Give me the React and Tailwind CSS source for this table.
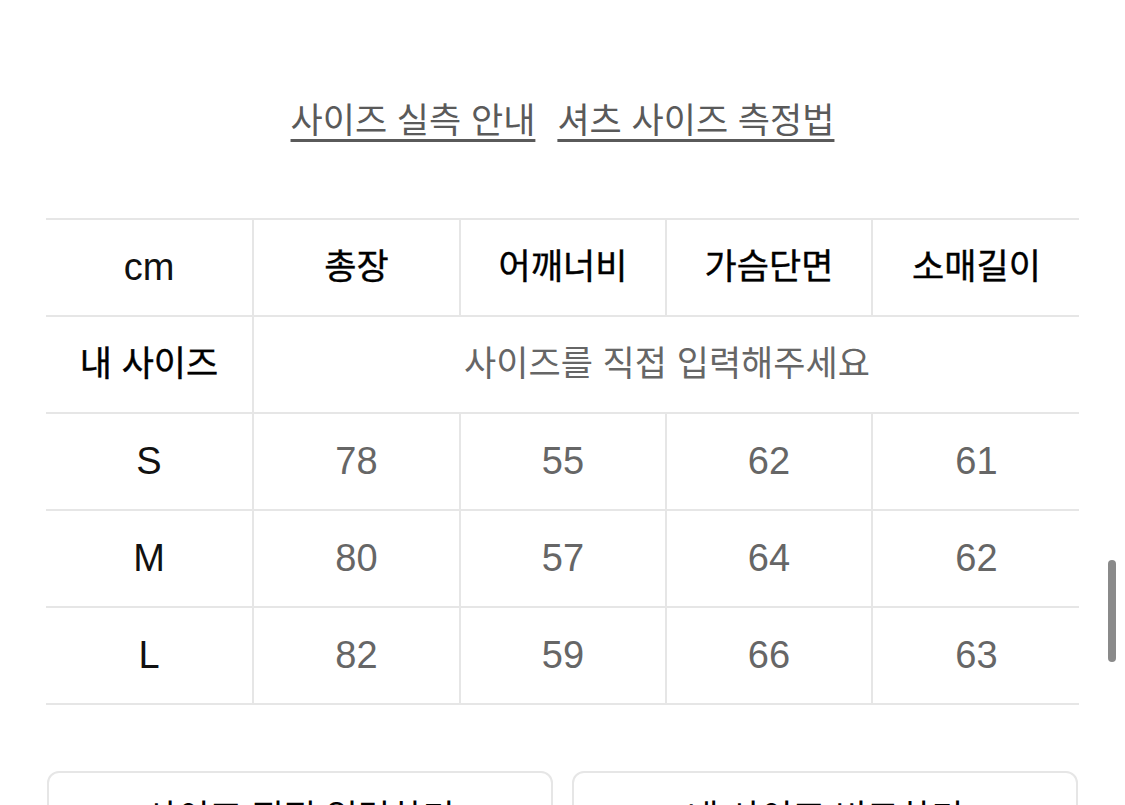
const font = { fontFamily: '"Liberation Sans", "Noto Sans CJK KR", sans-serif' };

const heads = ["총장", "어깨너비", "가슴단면", "소매길이"];

const rows = [
  { size: "S", values: ["78", "55", "62", "61"] },
  { size: "M", values: ["80", "57", "64", "62"] },
  { size: "L", values: ["82", "59", "66", "63"] },
];

const rowClass =
  "grid grid-cols-[208px_207px_206px_206px_207px] h-[97px] border-b-2 border-[#e6e6e6]";
const cellClass = "flex items-center justify-center border-r-2 border-[#e6e6e6]";
const lastCellClass = "flex items-center justify-center";

function SizeRow({ size, values }) {
  return (
    <div className={rowClass}>
      <div className={cellClass + " text-[38px] text-[#111]"}>{size}</div>
      {values.map((v, i) => (
        <div
          key={i}
          className={(i === values.length - 1 ? lastCellClass : cellClass) + " text-[38px] text-[#666]"}
        >
          {v}
        </div>
      ))}
    </div>
  );
}

export default function App() {
  return (
    <div className="relative h-[805px] w-[1125px] overflow-hidden bg-white" style={font}>
      <div className="flex justify-center gap-[22px] pt-[96px] text-[35px] leading-[50px] text-[#5a5a5a]">
        <a className="underline decoration-[3px] underline-offset-[6px]">사이즈 실측 안내</a>
        <a className="underline decoration-[3px] underline-offset-[6px]">셔츠 사이즈 측정법</a>
      </div>

      <div className="mx-[46px] mt-[72px] border-t-2 border-[#e6e6e6]">
        <div className={rowClass}>
          <div className={cellClass + " text-[38px] text-[#111]"}>cm</div>
          {heads.map((h, i) => (
            <div
              key={h}
              className={(i === heads.length - 1 ? lastCellClass : cellClass) + " text-[35px] text-black [-webkit-text-stroke:0.4px_black]"}
            >
              {h}
            </div>
          ))}
        </div>
        <div className={rowClass}>
          <div className={cellClass + " text-[35px] text-black [-webkit-text-stroke:0.4px_black]"}>내 사이즈</div>
          <div className="col-span-4 flex items-center justify-center text-[35px] text-[#666]">
            사이즈를 직접 입력해주세요
          </div>
        </div>
        {rows.map((r) => (
          <SizeRow key={r.size} {...r} />
        ))}
      </div>

      <div className="mx-[47px] mt-[66px] flex gap-[19px]">
        <button className="h-[96px] w-[506px] rounded-[12px] border-2 border-[#e6e6e6] pt-[25px] text-[35px] leading-[40px] text-black flex justify-center items-start">
          사이즈 직접 입력하기
        </button>
        <button className="h-[96px] w-[506px] rounded-[12px] border-2 border-[#e6e6e6] pt-[25px] text-[35px] leading-[40px] text-black flex justify-center items-start">
          내 사이즈 비교하기
        </button>
      </div>

      <div className="absolute left-[1108px] top-[560px] h-[102px] w-[8px] rounded-full bg-[#8a8a8a]" />
    </div>
  );
}
